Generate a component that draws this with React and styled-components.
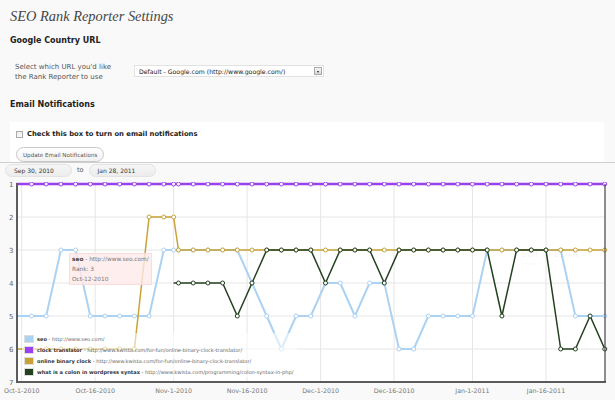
import React from 'react';
import styled, { createGlobalStyle } from 'styled-components';

const GlobalStyle = createGlobalStyle`
  html, body {
    margin: 0;
    padding: 0;
    background: #f9f9f9;
  }
  body {
    font-family: "DejaVu Sans", Verdana, sans-serif;
    color: #333;
    overflow: hidden;
  }
`;

// chart data
const DAYS = [];
for (let d = -1; d <= 29; d += 3) DAYS.push(d);
DAYS.push(31);
for (let d = 32; d <= 119; d += 3) DAYS.push(d);

const fill = (n, v) => Array(n).fill(v);

const SERIES = [
  {
    name: 'seo',
    url: 'http://www.seo.com/',
    color: '#acd2f2',
    width: 2,
    values: [5, 5, 5, 3, 3, 5, 5, 5, 5, 5, 3, 3, 3, 3, 3, 3, 3, 4, 5, 6, 5, 5, 4, 4, 5, 4, 4, 6, 6, 5, 5, 5, 5, 3, 3, 3, 3, 3, 3, 5, 5, 5],
  },
  {
    name: 'clock translator',
    url: 'http://www.kwista.com/for-fun/online-binary-clock-translator/',
    color: '#9a40ee',
    width: 2.5,
    values: fill(42, 1),
  },
  {
    name: 'online binary clock',
    url: 'http://www.kwista.com/for-fun/online-binary-clock-translator/',
    color: '#c9a237',
    width: 1.5,
    values: [...fill(9, 6), 2, 2, 2, ...fill(30, 3)],
  },
  {
    name: 'what is a colon in wordpress syntax',
    url: 'http://www.kwista.com/programming/colon-syntax-in-php/',
    color: '#23401f',
    width: 1.5,
    values: [...fill(11, null), 4, 4, 4, 4, 4, 5, 4, 3, 3, 3, 3, 4, 3, 3, 3, 4, 3, 3, 3, 3, 3, 3, 3, 5, 3, 3, 3, 6, 6, 5, 6],
  },
];

const DRAW_ORDER = [0, 2, 3, 1];

const TICKS = [
  { d: 0, label: 'Oct-1-2010' },
  { d: 15, label: 'Oct-16-2010' },
  { d: 31, label: 'Nov-1-2010' },
  { d: 46, label: 'Nov-16-2010' },
  { d: 61, label: 'Dec-1-2010' },
  { d: 76, label: 'Dec-16-2010' },
  { d: 92, label: 'Jan-1-2011' },
  { d: 107, label: 'Jan-16-2011' },
];

const xOf = (d) => Math.min(21.7 + 4.9 * d, 605);
const yOf = (r) => 2 + (r - 1) * 33;

const Chart = () => (
  <svg width="615" height="218" style={{ display: 'block' }}>
    <rect x="17" y="2" width="588" height="198" fill="#fff" />
    {[2, 3, 4, 5, 6].map((r) => (
      <line key={r} x1="17" x2="605" y1={yOf(r)} y2={yOf(r)} stroke="#e6e6e6" strokeWidth="1" />
    ))}
    {TICKS.map((t) => (
      <line key={t.d} x1={xOf(t.d)} x2={xOf(t.d)} y1="2" y2="200" stroke="#e6e6e6" strokeWidth="1" />
    ))}
    {[1, 2, 3, 4, 5, 6, 7].map((r) => (
      <text key={r} x="13.5" y={yOf(r) + 2.5} textAnchor="end" fontSize="7" fill="#666" fontFamily="DejaVu Sans, sans-serif">
        {r}
      </text>
    ))}
    {TICKS.map((t) => (
      <text key={t.label} x={xOf(t.d)} y="211" textAnchor="middle" fontSize="6.3" fill="#777" fontFamily="DejaVu Sans, sans-serif">
        {t.label}
      </text>
    ))}
    {DRAW_ORDER.map((i) => {
      const s = SERIES[i];
      const pts = DAYS.map((d, k) => (s.values[k] == null ? null : [xOf(d), yOf(s.values[k])])).filter(Boolean);
      return (
        <g key={s.name}>
          <polyline points={pts.map((p) => p.join(',')).join(' ')} fill="none" stroke={s.color} strokeWidth={s.width} strokeLinejoin="round" />
          {pts.slice(1).map((p, k) => (
            <circle key={k} cx={p[0]} cy={p[1]} r="2" fill="#fff" stroke={s.color} strokeWidth="1" />
          ))}
        </g>
      );
    })}
    <line x1="17" x2="17" y1="1" y2="201" stroke="#5c5c5c" strokeWidth="2" />
    <line x1="16" x2="606" y1="200" y2="200" stroke="#5c5c5c" strokeWidth="2" />
    <line x1="605" x2="605" y1="2" y2="200" stroke="#444" strokeWidth="1.2" />
  </svg>
);

const App = () => (
  <Page>
    <GlobalStyle />
    <Title>SEO Rank Reporter Settings</Title>
    <Heading>Google Country URL</Heading>
    <FormRow>
      <FieldLabel>
        Select which URL you'd like
        <br />
        the Rank Reporter to use
      </FieldLabel>
      <Select>
        <span>Default - Google.com (http://www.google.com/)</span>
        <SelectArrow />
      </Select>
    </FormRow>
    <Heading $top={18}>Email Notifications</Heading>
    <Panel>
      <CheckRow>
        <Check type="checkbox" />
        <span>Check this box to turn on email notifications</span>
      </CheckRow>
      <PillButton>Update Email Notifications</PillButton>
    </Panel>
    <ChartSection>
      <DateBar>
        <DatePill>Sep 30, 2010</DatePill>
        <To>to</To>
        <DatePill>Jan 28, 2011</DatePill>
      </DateBar>
      <ChartBox>
        <Chart />
        <Tooltip>
          <div>
            <b>seo</b> - http://www.seo.com/
          </div>
          <div>Rank: 3</div>
          <div>Oct-12-2010</div>
        </Tooltip>
        <Legend>
          {SERIES.map((s) => (
            <LegendRow key={s.name}>
              <Swatch $color={s.color} />
              <b>{s.name}</b>
              <span>&nbsp;- {s.url}</span>
            </LegendRow>
          ))}
        </Legend>
        <Watermark>
          SOFTPEDIA
          <small>www.softpedia.com</small>
        </Watermark>
      </ChartBox>
    </ChartSection>
  </Page>
);

const Page = styled.div`
  width: 615px;
  height: 400px;
  overflow: hidden;
`;

const Title = styled.h2`
  margin: 0;
  padding: 7px 0 0 10px;
  font-family: "Liberation Serif", serif;
  font-style: italic;
  font-weight: normal;
  font-size: 14.4px;
  line-height: 18px;
  color: #464646;
`;

const Heading = styled.h3`
  margin: ${(p) => p.$top || 11}px 0 0 10px;
  font-size: 8px;
  line-height: 10px;
  font-weight: bold;
  color: #222;
`;

const FormRow = styled.div`
  display: flex;
  align-items: flex-start;
  margin-top: 17px;
  padding-left: 15px;
`;

const FieldLabel = styled.div`
  width: 119px;
  font-size: 7px;
  line-height: 9.5px;
  color: #555;
`;

const Select = styled.div`
  width: 184px;
  height: 10px;
  margin-top: 2px;
  display: flex;
  align-items: center;
  justify-content: space-between;
  padding-left: 4px;
  background: #fff;
  border: 1px solid #e2e2e2;
  font-size: 6.2px;
  color: #222;
`;

const SelectArrow = styled.span`
  width: 8px;
  height: 8px;
  margin-right: 1px;
  box-sizing: border-box;
  border: 1px solid #aaa;
  background: linear-gradient(#f4f4f4, #d8d8d8);
  position: relative;

  &::after {
    content: '';
    position: absolute;
    left: 1.5px;
    top: 2.5px;
    border-left: 1.5px solid transparent;
    border-right: 1.5px solid transparent;
    border-top: 2px solid #222;
  }
`;

const Panel = styled.div`
  margin: 12px 11px 0 10px;
  height: 40px;
  box-sizing: border-box;
  padding: 8px 0 0 6px;
  background: #fff;
`;

const CheckRow = styled.label`
  display: flex;
  align-items: center;
  gap: 4px;
  font-size: 6.8px;
  font-weight: bold;
  color: #222;
`;

const Check = styled.input`
  appearance: none;
  margin: 0;
  width: 7px;
  height: 7px;
  border: 1px solid #aaa;
  background: linear-gradient(#eee, #fafafa);
`;

const PillButton = styled.button`
  margin-top: 9px;
  height: 15px;
  padding: 0 6px;
  border: 1px solid #c8c8c8;
  border-radius: 8px;
  background: linear-gradient(#fff, #f1f1f1);
  font-family: "DejaVu Sans", sans-serif;
  font-size: 5.6px;
  color: #555;
`;

const ChartSection = styled.div`
  border-top: 1px solid #cfcfcf;
`;

const DateBar = styled.div`
  height: 19px;
  display: flex;
  align-items: flex-start;
  padding: 1px 0 0 5px;
  box-sizing: border-box;
  gap: 5px;
`;

const DatePill = styled.div`
  width: 67px;
  height: 13px;
  box-sizing: border-box;
  padding-left: 8px;
  display: flex;
  align-items: center;
  border: 1px solid #e3e3e3;
  border-radius: 7px;
  background: linear-gradient(#f6f6f6, #ececec);
  font-size: 6px;
  color: #333;
`;

const To = styled.span`
  font-size: 6.5px;
  line-height: 13px;
  color: #555;
`;

const ChartBox = styled.div`
  position: relative;
  height: 218px;
`;

const Tooltip = styled.div`
  position: absolute;
  left: 69px;
  top: 71px;
  width: 83px;
  height: 32px;
  box-sizing: border-box;
  padding: 1px 0 0 2px;
  background: rgba(255, 234, 234, 0.8);
  border: 1px solid rgba(250, 215, 215, 0.8);
  font-size: 5.8px;
  line-height: 9.8px;
  color: #777;
  white-space: nowrap;

  b {
    color: #444;
  }
`;

const Legend = styled.div`
  position: absolute;
  left: 22px;
  top: 151px;
  padding: 1px 4px 1px 2px;
  background: rgba(255, 255, 255, 0.55);
  font-size: 5.1px;
  color: #666;

  b {
    color: #333;
  }
`;

const LegendRow = styled.div`
  display: flex;
  align-items: center;
  height: 10.8px;
  white-space: nowrap;
`;

const Swatch = styled.span`
  width: 8px;
  height: 6px;
  margin-right: 3px;
  background: ${(p) => p.$color};
  border: 1px solid #ddd;
`;

const Watermark = styled.div`
  position: absolute;
  left: 521px;
  top: 66px;
  display: flex;
  flex-direction: column;
  align-items: center;
  font-family: "Liberation Serif", serif;
  font-size: 10px;
  letter-spacing: 0.5px;
  color: rgba(0, 0, 0, 0.07);

  small {
    font-family: "DejaVu Sans", sans-serif;
    font-size: 4.5px;
    margin-top: 2px;
  }
`;

export default App;
